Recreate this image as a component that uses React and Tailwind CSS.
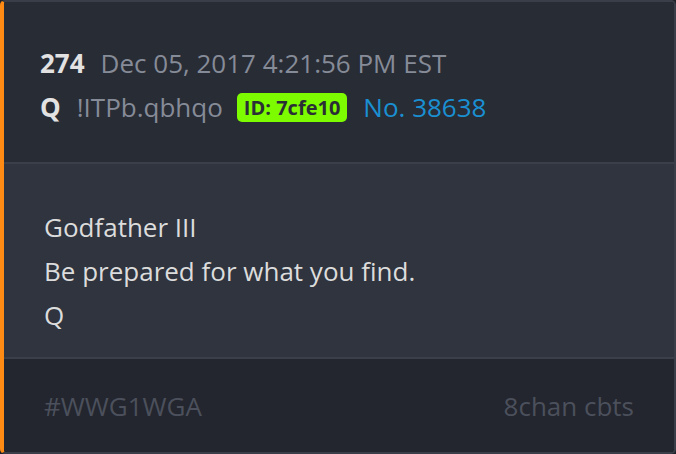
import React from 'react';

const post = {
  count: 274,
  date: 'Dec 05, 2017 4:21:56 PM EST',
  name: 'Q',
  trip: '!ITPb.qbhqo',
  id: '7cfe10',
  no: 38638,
  lines: ['Godfather III', 'Be prepared for what you find.', 'Q'],
  tag: '#WWG1WGA',
  source: '8chan cbts',
};

const App = () => {
  return (
    <div
      className="w-[676px] h-[454px] bg-[#1f2228]"
      style={{ fontFamily: '"Open Sans", "Noto Sans", sans-serif' }}
    >
      <div className="h-full flex flex-col rounded-[5px] overflow-hidden border-t-2 border-r-2 border-b-2 border-l-4 border-t-[#3a3e48] border-r-[#3a3e48] border-b-[#3a3e48] border-l-[#ff8a14] text-[26px] leading-[44px]">
        {/* Header */}
        <div className="bg-[#282c35] pl-[36px] pr-10 pt-[39px] pb-[33px] border-b-2 border-[#3a3f4a]">
          <div className="flex items-center gap-4">
            <span className="font-bold text-[#e2e2e2]">{post.count}</span>
            <span className="text-[#868b98]">{post.date}</span>
          </div>
          <div className="flex items-center gap-4">
            <span className="font-bold text-[#e2e2e2]">{post.name}</span>
            <span className="text-[#868b98]">{post.trip}</span>
            <span className="-ml-[2px] h-[29px] px-[7px] rounded-[5px] bg-[#7dfc00] text-[#2a2e36] text-[20px] leading-[29px] font-bold">
              ID: {post.id}
            </span>
            <span className="text-[#1a90d2]">No. {post.no}</span>
          </div>
        </div>

        {/* Body */}
        <div className="bg-[#2f343e] pl-10 pr-10 pt-[41px] pb-[20px] border-b-2 border-[#3a3f4a] text-[#dcdcdc]">
          {post.lines.map((l, i) => (
            <div key={i}>{l}</div>
          ))}
        </div>

        {/* Footer */}
        <div className="flex-1 bg-[#23262e] pl-10 pr-10 pt-[25px] flex justify-between text-[#4b505c]">
          <span>{post.tag}</span>
          <span>{post.source}</span>
        </div>
      </div>
    </div>
  );
};

export default App;
